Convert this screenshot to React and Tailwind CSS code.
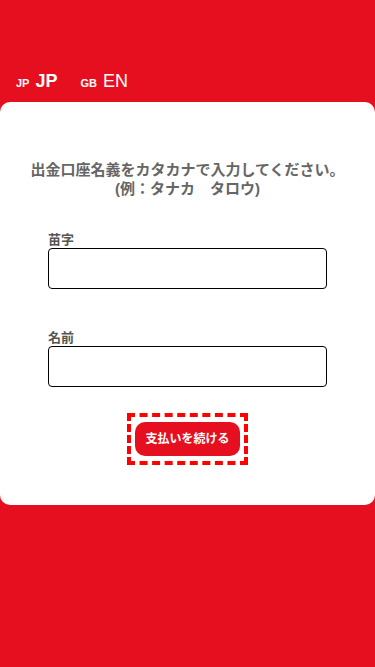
import React from "react";

export default function App() {
  return (
    <div className="min-h-[667px] bg-[#e60f20] pt-[68px] pb-[161px] font-['Liberation_Sans','Noto_Sans_CJK_JP',sans-serif]">
      <div className="flex items-baseline px-4 h-[34px] text-white">
        <span className="text-[11px] font-bold mr-[6px]">JP</span>
        <span className="text-[18px] font-bold">JP</span>
        <span className="text-[11px] font-bold ml-[23px] mr-[6px]">GB</span>
        <span className="text-[18px]">EN</span>
      </div>

      <div className="bg-white rounded-[10px] h-[403px] pt-[58px] flex flex-col items-center">
        <p className="text-[15px] leading-[19px] font-bold text-[#666] text-center">
          出金口座名義をカタカナで入力してください。
          <br />
          (例：タナカ　タロウ)
        </p>

        <div className="w-[279px] mt-[34px]">
          <label className="block text-[13px] font-bold text-[#555] leading-[16px]">苗字</label>
          <input className="block w-full h-[41px] border border-black rounded-[4px] outline-none" />

          <label className="block text-[13px] font-bold text-[#555] leading-[16px] mt-[41px]">名前</label>
          <input className="block w-full h-[41px] border border-black rounded-[4px] outline-none" />
        </div>

        <div className="mt-[26px] border-4 border-dashed border-[#ff0000] px-[4px] py-[5px]">
          <button className="block h-[34px] px-[10px] rounded-[10px] bg-[#e60f20] text-white text-[12px] font-bold">
            支払いを続ける
          </button>
        </div>
      </div>
    </div>
  );
}
